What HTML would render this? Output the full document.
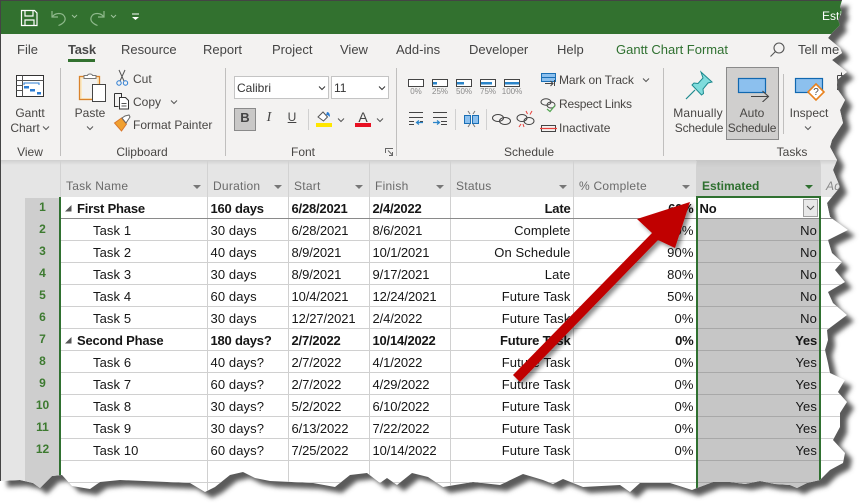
<!DOCTYPE html>
<html><head><meta charset="utf-8"><style>
html,body{margin:0;padding:0;width:861px;height:503px;overflow:hidden;background:#fff;font-family:"Liberation Sans",sans-serif}
#sh{position:absolute;left:0;top:0}
#c{position:absolute;left:0;top:0;width:861px;height:503px;overflow:hidden;background:#fff;
clip-path:polygon(0 0,842px 0,840px 7px,842px 12px,838px 20px,840px 25px,832px 33px,828px 38px,840px 48px,842px 53px,832px 60px,847px 72px,837px 80px,838px 90px,845px 100px,840px 110px,843px 123px,832px 140px,830px 147px,837px 160px,833px 170px,840px 187px,827px 203px,830px 217px,848px 230px,828px 240px,832px 253px,842px 262px,835px 270px,845px 282px,828px 292px,833px 303px,847px 315px,827px 330px,828px 340px,825px 350px,828px 363px,830px 373px,845px 380px,838px 392px,847px 402px,840px 413px,840px 427px,833px 440px,845px 453px,843px 463px,830px 470px,820px 480px,807px 483px,797px 488px,790px 485px,775px 484px,760px 481px,745px 484px,730px 482px,713px 482px,697px 488px,692px 490px,670px 483px,640px 483px,630px 492px,620px 485px,583px 487px,563px 479px,553px 484px,543px 480px,523px 474px,500px 485px,473px 482px,443px 487px,428px 477px,412px 473px,397px 485px,387px 478px,380px 483px,367px 473px,350px 475px,335px 487px,313px 483px,270px 481px,255px 478px,243px 472px,230px 475px,215px 487px,205px 492px,190px 483px,120px 480px,100px 482px,90px 489px,72px 486px,62px 475px,52px 476px,40px 488px,33px 483px,20px 480px,0 481px)}
.t{position:absolute;white-space:nowrap;line-height:14px;height:14px;color:#484644;font-size:12px;letter-spacing:0}
.tab{font-size:13px;letter-spacing:0;top:43px;color:#444}
.ctr{transform:translateX(-50%)}
.abs{position:absolute}
.sep{position:absolute;width:1px;background:#c0bfbe}
table{position:absolute;left:60px;top:197px;border-collapse:collapse;table-layout:fixed;width:800px;font-size:13px;color:#161616;letter-spacing:.1px}
td{height:19px;padding:2px 2px 0 3px;border-right:1px solid #d0d0d0;border-bottom:1px solid #d0d0d0;white-space:nowrap;overflow:hidden;box-sizing:content-box;line-height:14px}
td.r{text-align:right}
tr.b td{font-weight:bold;letter-spacing:-.2px}
td.e{background:#c6c6c6;border-right:none;border-bottom:1px solid #a8a8a8;text-align:right;padding-right:3px}
td.n{border-right:none}
td.d{letter-spacing:-.1px}
tr.f td{border-bottom:1px solid #8a8a8a;background:#fff}
.n1{padding-left:17px}.n2{padding-left:33px}
.h{position:absolute;top:179px;font-size:12px;color:#6a6a6a;line-height:14px;letter-spacing:.25px;white-space:nowrap}
.ar{position:absolute;top:185px;width:0;height:0;border-left:4px solid transparent;border-right:4px solid transparent;border-top:4px solid #777}
.rn{position:absolute;left:25px;width:35px;text-align:center;font-size:12px;font-weight:bold;color:#3d7a30;line-height:14px}
.lbl{position:absolute;font-size:8px;color:#8a8a8a;top:87px;letter-spacing:0;line-height:9px;white-space:nowrap;transform:translateX(-50%)}
</style></head><body>
<svg id="sh" width="861" height="503">
<defs><filter id="bl" x="-5%" y="-5%" width="110%" height="110%"><feGaussianBlur stdDeviation="2.300"/></filter></defs>
<polygon transform="translate(7,6)" filter="url(#bl)" fill="#5a5a5a" points="0,0 842,0 840,7 842,12 838,20 840,25 832,33 828,38 840,48 842,53 832,60 847,72 837,80 838,90 845,100 840,110 843,123 832,140 830,147 837,160 833,170 840,187 827,203 830,217 848,230 828,240 832,253 842,262 835,270 845,282 828,292 833,303 847,315 827,330 828,340 825,350 828,363 830,373 845,380 838,392 847,402 840,413 840,427 833,440 845,453 843,463 830,470 820,480 807,483 797,488 790,485 775,484 760,481 745,484 730,482 713,482 697,488 692,490 670,483 640,483 630,492 620,485 583,487 563,479 553,484 543,480 523,474 500,485 473,482 443,487 428,477 412,473 397,485 387,478 380,483 367,473 350,475 335,487 313,483 270,481 255,478 243,472 230,475 215,487 205,492 190,483 120,480 100,482 90,489 72,486 62,475 52,476 40,488 33,483 20,480 0,481"/>
</svg>
<div id="c">
<!-- title bar -->
<div class="abs" style="left:0;top:0;width:861px;height:34px;background:#32712f;border-top:1px solid #444;box-sizing:border-box"></div>
<div class="abs" style="left:0;top:34px;width:861px;height:126px;background:#f3f2f1"></div>
<div class="abs" style="left:0;top:160px;width:861px;height:38px;background:#e5e5e5"></div>
<div class="abs" style="left:0;top:160px;width:861px;height:5px;background:linear-gradient(#cfcfcf,#e5e5e5)"></div>
<div class="abs" style="left:0;top:198px;width:25px;height:290px;background:#e5e5e5"></div>
<div class="abs" style="left:25px;top:198px;width:35px;height:290px;background:#cecece"></div>
<div class="abs" style="left:0;top:0;width:1px;height:490px;background:#444"></div>

<svg class="abs" style="left:0;top:0" width="160" height="34" fill="none">
<path d="M21.500 10.500h13l2.500 2.500v12.500h-15.500z M25 10.500v5.500h8v-5.500 M25 25.500v-5.500h9v5.500" stroke="#fff" stroke-width="1.200"/>
<path d="M52 11v6h6 M52.500 16.500c3-4 10-4 12 0s-1 7-6 9" stroke="#8fb98c" stroke-width="1.200"/>
<path d="M104 11v6h-6 M103.500 16.500c-3-4-10-4-12 0s1 7 6 9" stroke="#8fb98c" stroke-width="1.200"/>
<path d="M72 15l2.500 2.500 2.500-2.500 M111 15l2.500 2.500 2.500-2.500" stroke="#9cc29a"/>
<path d="M132 14h7" stroke="#fff"/><path d="M132 17l3.500 3 3.500-3z" fill="#fff"/>
</svg>
<span class="t" style="left:822px;top:9px;color:#fff;font-size:12px">Esti</span>

<span class="t tab" style="left:17px">File</span>
<span class="t tab" style="left:68px;font-weight:bold;letter-spacing:-.2px;color:#4a4a4a">Task</span>
<div class="abs" style="left:68px;top:59px;width:27px;height:3px;background:#32712f"></div>
<span class="t tab" style="left:121px">Resource</span>
<span class="t tab" style="left:203px">Report</span>
<span class="t tab" style="left:272px">Project</span>
<span class="t tab" style="left:340px">View</span>
<span class="t tab" style="left:396px">Add-ins</span>
<span class="t tab" style="left:469px">Developer</span>
<span class="t tab" style="left:557px">Help</span>
<span class="t tab" style="left:616px;color:#2f7030">Gantt Chart Format</span>
<span class="t tab" style="left:798px">Tell me</span>
<svg class="abs" style="left:768px;top:41px" width="18" height="18" fill="none" stroke="#555" stroke-width="1.100"><circle cx="11" cy="7" r="5"/><path d="M7.500 10.500l-5 5"/></svg>

<div class="sep" style="left:60px;top:68px;height:88px"></div>
<div class="sep" style="left:225px;top:68px;height:88px"></div>
<div class="sep" style="left:396px;top:68px;height:88px"></div>
<div class="sep" style="left:663px;top:68px;height:88px"></div>
<div class="sep" style="left:783px;top:74px;height:60px"></div>
<div class="sep" style="left:308px;top:109px;height:21px;background:#d0d0d0"></div>
<div class="sep" style="left:455px;top:109px;height:21px;background:#d0d0d0"></div>
<div class="sep" style="left:486px;top:109px;height:21px;background:#d0d0d0"></div>

<!-- Gantt -->
<svg class="abs" style="left:14px;top:72px" width="32" height="28" fill="none">
<rect x="2.500" y="3.500" width="27" height="21" fill="#fff" stroke="#333"/>
<path d="M2.500 8.500h27M2.500 13.500h6M2.500 18.500h6M8.500 3.500v21" stroke="#555"/>
<path d="M10 13v-2h15v2" stroke="#2b7cd3"/>
<rect x="10" y="14" width="5" height="2.500" fill="#2b7cd3"/><rect x="16" y="17" width="5" height="2.500" fill="#2b7cd3"/><rect x="23" y="20" width="4" height="2.500" fill="#2b7cd3"/>
</svg>
<span class="t ctr" style="left:30px;top:106px">Gantt</span>
<span class="t ctr" style="left:25px;top:121px">Chart</span>
<svg class="abs" style="left:42px;top:125px" width="8" height="6" fill="none" stroke="#555"><path d="M1 1.500l3 3 3-3"/></svg>
<span class="t ctr" style="left:30px;top:145px">View</span>

<!-- Paste -->
<svg class="abs" style="left:76px;top:70px" width="34" height="34" fill="none">
<rect x="3.500" y="6.500" width="20" height="23" fill="#fbe9c4" stroke="#d9822b" stroke-width="1.300"/>
<rect x="6" y="9" width="15" height="19" fill="#f3f2f1" stroke="none"/>
<path d="M8 7.500v-2h3.500c.5-2 4.500-2 5 0h3.500v3h-12z" fill="#fff" stroke="#777"/>
<rect x="16.500" y="14.500" width="13" height="17" fill="#fff" stroke="#444"/>
</svg>
<span class="t ctr" style="left:90px;top:106px">Paste</span>
<svg class="abs" style="left:86px;top:125px" width="8" height="6" fill="none" stroke="#555"><path d="M1 1.500l3 3 3-3"/></svg>
<svg class="abs" style="left:115px;top:69px" width="16" height="18" fill="none">
<path d="M4 1l5 11M10 1l-5 11" stroke="#555"/><circle cx="4" cy="14" r="2.200" stroke="#2b7cd3"/><circle cx="10.500" cy="14" r="2.200" stroke="#2b7cd3"/>
</svg>
<span class="t" style="left:133px;top:72px">Cut</span>
<svg class="abs" style="left:113px;top:92px" width="18" height="18" fill="none" stroke="#333">
<path d="M1.500 1.500h7v5 M5.500 14.500h-4v-13"/><path d="M6.500 5.500h6l3 3v8.500h-9z" fill="#fff"/><path d="M8.500 11.500h5M8.500 14h5" stroke="#555"/></svg>
<span class="t" style="left:133px;top:95px">Copy</span>
<svg class="abs" style="left:170px;top:99px" width="8" height="6" fill="none" stroke="#555"><path d="M1 1.500l3 3 3-3"/></svg>
<svg class="abs" style="left:113px;top:114px" width="19" height="18" fill="none">
<path d="M1.500 9l7-5 5 6-5 7z" fill="#f0a030" stroke="#d9772b"/><path d="M9 4l3-2 4-1 1 2-2 3-2 3z" fill="#fff" stroke="#666"/></svg>
<span class="t" style="left:133px;top:118px">Format Painter</span>
<span class="t ctr" style="left:142px;top:145px">Clipboard</span>

<!-- Font -->
<div class="abs" style="left:234px;top:76px;width:95px;height:23px;background:#fff;border:1px solid #c4c4c4;box-sizing:border-box"></div>
<div class="abs" style="left:331px;top:76px;width:58px;height:23px;background:#fff;border:1px solid #c4c4c4;box-sizing:border-box"></div>
<span class="t" style="left:237px;top:81px;color:#333">Calibri</span>
<span class="t" style="left:334px;top:81px;color:#333">11</span>
<svg class="abs" style="left:318px;top:85px" width="8" height="6" fill="none" stroke="#333"><path d="M1 1.500l3 3 3-3"/></svg>
<svg class="abs" style="left:378px;top:85px" width="8" height="6" fill="none" stroke="#333"><path d="M1 1.500l3 3 3-3"/></svg>
<div class="abs" style="left:234px;top:108px;width:22px;height:23px;background:#c9c8c7;border:1px solid #8a8a8a;box-sizing:border-box"></div>
<span class="t ctr" style="left:245px;top:111px;font-weight:bold;font-size:13px;color:#444">B</span>
<span class="t ctr" style="left:269px;top:111px;font-style:italic;font-family:'Liberation Serif',serif;font-size:14px;color:#444">I</span>
<span class="t ctr" style="left:292px;top:110px;text-decoration:underline;font-size:12px;color:#444">U</span>
<svg class="abs" style="left:316px;top:109px" width="18" height="19" fill="none">
<path d="M2 8l5-5 4.500 5-4 4z" fill="#fff" stroke="#555"/><path d="M11 3c2 0 3 2 3 5-1-1-2-2-4-2z" fill="#2b7cd3"/>
<rect y="14" width="16" height="4" fill="#ffe600"/></svg>
<svg class="abs" style="left:337px;top:117px" width="8" height="6" fill="none" stroke="#555"><path d="M1 1.500l3 3 3-3"/></svg>
<span class="t ctr" style="left:363px;top:110px;font-size:14px;color:#444">A</span>
<div class="abs" style="left:355px;top:123px;width:16px;height:4px;background:#e81123"></div>
<svg class="abs" style="left:376px;top:117px" width="8" height="6" fill="none" stroke="#555"><path d="M1 1.500l3 3 3-3"/></svg>
<span class="t ctr" style="left:303px;top:145px">Font</span>
<svg class="abs" style="left:384px;top:147px" width="10" height="10" fill="none" stroke="#666"><path d="M1.500 6v-4.500h7.500M4 3.500l4.500 4.500M8.500 5v3.500h-3.500"/></svg>

<!-- Schedule -->
<svg class="abs" style="left:406px;top:76px" width="118" height="12">
<g fill="#fff" stroke="#444"><rect x="2.500" y="3.500" width="15" height="7"/><rect x="26.500" y="3.500" width="15" height="7"/><rect x="50.500" y="3.500" width="15" height="7"/><rect x="74.500" y="3.500" width="15" height="7"/><rect x="98.500" y="3.500" width="15" height="7"/></g>
<g fill="#2b85c9"><rect x="27" y="6" width="4" height="2.500"/><rect x="51" y="6" width="7" height="2.500"/><rect x="75" y="6" width="11" height="2.500"/><rect x="99" y="6" width="14" height="2.500"/></g>
</svg>
<span class="lbl" style="left:416px">0%</span><span class="lbl" style="left:440px">25%</span><span class="lbl" style="left:464px">50%</span><span class="lbl" style="left:488px">75%</span><span class="lbl" style="left:512px">100%</span>
<svg class="abs" style="left:408px;top:110px" width="130" height="18" fill="none">
<g stroke="#444"><path d="M1 2.500h14M1 7.500h14M1 11.500h5M12 11.500h3M1 14.500h5"/><path d="M25 2.500h14M25 7.500h14M33 11.500h6M33 14.500h6"/></g>
<path d="M15 12.500h-6M11 10.500l-2.500 2 2.500 2" stroke="#2b85c9" stroke-width="1.200"/>
<path d="M25 12.500h6M29 10.500l2.500 2-2.500 2" stroke="#2b85c9" stroke-width="1.200"/>
<rect x="56.500" y="5.500" width="6" height="8" fill="#8cc0ee" stroke="#1a6fb5"/><rect x="64.500" y="5.500" width="6" height="8" fill="#8cc0ee" stroke="#1a6fb5"/>
<path d="M60 1l2 3M67 1l-2 3M60 17l2-3M67 17l-2-3" stroke="#777"/>
<ellipse cx="90" cy="8" rx="5.500" ry="3.500" stroke="#444"/><ellipse cx="97" cy="11" rx="5.500" ry="3.500" stroke="#444"/>
<ellipse cx="114" cy="8" rx="5" ry="3.500" stroke="#444"/><ellipse cx="121" cy="11" rx="5" ry="3.500" stroke="#444"/>
<path d="M118 1l1.500 3M124 1l-2 3.500M111 17l2-3M116 17l-1-3" stroke="#e8413c"/>
</svg>
<span class="t ctr" style="left:529px;top:145px">Schedule</span>
<svg class="abs" style="left:539px;top:70px" width="20" height="66" fill="none">
<rect x="2.500" y="3.500" width="14" height="8" fill="#8cc0ee" stroke="#1a6fb5"/><path d="M2 7.500h15" stroke="#1a6fb5"/><path d="M6 13.500h8M11.500 11l2.500 2.500-2.500 2.500M15.500 10v6" stroke="#444"/>
<ellipse cx="7" cy="32" rx="5" ry="3.200" stroke="#444"/><ellipse cx="12" cy="35" rx="4" ry="3" stroke="#444"/><path d="M8 39l3 2.500 5-6" stroke="#53a652" stroke-width="1.200"/>
<path d="M2.500 55.500h14v6h-14z" stroke="#444"/><path d="M1 58.500h17" stroke="#e8413c" stroke-width="1.300"/>
</svg>
<span class="t" style="left:559px;top:73px;letter-spacing:-.1px">Mark on Track</span>
<svg class="abs" style="left:642px;top:77px" width="8" height="6" fill="none" stroke="#555"><path d="M1 1.500l3 3 3-3"/></svg>
<span class="t" style="left:559px;top:97px;letter-spacing:-.2px">Respect Links</span>
<span class="t" style="left:559px;top:121px">Inactivate</span>

<!-- Tasks -->
<svg class="abs" style="left:684px;top:70px" width="30" height="32" fill="none">
<path d="M17 2l11 10-4 1-5 6 .5 4.500-2 1.500L8 15l2-2 4 .5 5-5.500z" fill="#7fdcdc" stroke="#1d8a8f"/><path d="M11 20L2 29" stroke="#1d8a8f" stroke-width="1.200"/>
</svg>
<span class="t ctr" style="left:698px;top:106px;letter-spacing:.2px">Manually</span>
<span class="t ctr" style="left:699px;top:121px;letter-spacing:-.2px">Schedule</span>
<div class="abs" style="left:726px;top:67px;width:53px;height:73px;background:#d0cfce;border:1px solid #8a8a8a;box-sizing:border-box"></div>
<svg class="abs" style="left:736px;top:76px" width="34" height="26" fill="none">
<rect x="2.500" y="2.500" width="27" height="14" fill="#8cc0ee" stroke="#1168b0" stroke-width="1.200"/>
<path d="M15 20.500h17M26.500 15l6 5.500-6 5.500" stroke="#444" stroke-width="1.100"/>
</svg>
<span class="t ctr" style="left:752px;top:106px">Auto</span>
<span class="t ctr" style="left:752px;top:121px;letter-spacing:-.2px">Schedule</span>
<svg class="abs" style="left:793px;top:76px" width="34" height="28" fill="none">
<rect x="2.500" y="2.500" width="27" height="14" fill="#8cc0ee" stroke="#1168b0" stroke-width="1.200"/>
<path d="M23 8l8 8-8 8-8-8z" fill="#fff" stroke="#e8821e" stroke-width="1.600"/>
</svg>
<span class="t ctr" style="left:816px;top:86px;font-size:10px">?</span>
<span class="t ctr" style="left:809px;top:106px">Inspect</span>
<svg class="abs" style="left:804px;top:125px" width="8" height="6" fill="none" stroke="#555"><path d="M1 1.500l3 3 3-3"/></svg>
<span class="t ctr" style="left:792px;top:145px">Tasks</span>
<svg class="abs" style="left:836px;top:72px" width="12" height="20" fill="none" stroke="#444"><path d="M1.500 3.500h10M1.500 3.500v14h10M1.500 9.500h10M5.500 .5v5"/></svg>

<!-- header -->
<div class="abs" style="left:696px;top:160px;width:124px;height:38px;background:linear-gradient(#c6c6c6,#d2d2d2 20%)"></div>
<div class="abs" style="left:60px;top:197px;width:780px;height:1px;background:#9a9a9a"></div>
<div class="sep" style="left:60px;top:161px;height:36px;background:#d2d2d2"></div>
<div class="sep" style="left:207px;top:161px;height:36px;background:#d2d2d2"></div>
<div class="sep" style="left:288px;top:161px;height:36px;background:#d2d2d2"></div>
<div class="sep" style="left:369px;top:161px;height:36px;background:#d2d2d2"></div>
<div class="sep" style="left:450px;top:161px;height:36px;background:#d2d2d2"></div>
<div class="sep" style="left:573px;top:161px;height:36px;background:#d2d2d2"></div>
<div class="sep" style="left:696px;top:161px;height:36px;background:#d2d2d2"></div>
<div class="sep" style="left:820px;top:161px;height:36px;background:#d2d2d2"></div>
<span class="h" style="left:66px">Task Name</span><i class="ar" style="left:193px"></i>
<span class="h" style="left:213px">Duration</span><i class="ar" style="left:274px"></i>
<span class="h" style="left:294px">Start</span><i class="ar" style="left:355px"></i>
<span class="h" style="left:375px">Finish</span><i class="ar" style="left:436px"></i>
<span class="h" style="left:456px">Status</span><i class="ar" style="left:559px"></i>
<span class="h" style="left:579px">% Complete</span><i class="ar" style="left:682px"></i>
<span class="h" style="left:702px;font-weight:bold;color:#2f7030;letter-spacing:0">Estimated</span><i class="ar" style="left:805px;border-top-color:#2f7030"></i>
<span class="h" style="left:826px;font-style:italic;color:#8a8a8a">Add</span>

<!-- row nums -->
<span class="rn" style="top:200px">1</span><span class="rn" style="top:222px">2</span><span class="rn" style="top:244px">3</span><span class="rn" style="top:266px">4</span><span class="rn" style="top:288px">5</span><span class="rn" style="top:310px">6</span><span class="rn" style="top:332px">7</span><span class="rn" style="top:354px">8</span><span class="rn" style="top:376px">9</span><span class="rn" style="top:398px">10</span><span class="rn" style="top:420px">11</span><span class="rn" style="top:442px">12</span>

<table>
<colgroup><col style="width:147px"><col style="width:81px"><col style="width:81px"><col style="width:81px"><col style="width:123px"><col style="width:123px"><col style="width:124px"><col style="width:40px"></colgroup>
<tr class="b f"><td class="n1">First Phase</td><td>160 days</td><td>6/28/2021</td><td>2/4/2022</td><td class="r">Late</td><td class="r">60%</td><td style="background:#fff;border-right:none">No</td><td class="n"></td></tr>
<tr><td class="n2">Task 1</td><td>30 days</td><td class="d">6/28/2021</td><td class="d">8/6/2021</td><td class="r">Complete</td><td class="r">100%</td><td class="e">No</td><td class="n"></td></tr>
<tr><td class="n2">Task 2</td><td>40 days</td><td class="d">8/9/2021</td><td class="d">10/1/2021</td><td class="r">On Schedule</td><td class="r">90%</td><td class="e">No</td><td class="n"></td></tr>
<tr><td class="n2">Task 3</td><td>30 days</td><td class="d">8/9/2021</td><td class="d">9/17/2021</td><td class="r">Late</td><td class="r">80%</td><td class="e">No</td><td class="n"></td></tr>
<tr><td class="n2">Task 4</td><td>60 days</td><td class="d">10/4/2021</td><td class="d">12/24/2021</td><td class="r">Future Task</td><td class="r">50%</td><td class="e">No</td><td class="n"></td></tr>
<tr><td class="n2">Task 5</td><td>30 days</td><td class="d">12/27/2021</td><td class="d">2/4/2022</td><td class="r">Future Task</td><td class="r">0%</td><td class="e">No</td><td class="n"></td></tr>
<tr class="b"><td class="n1">Second Phase</td><td>180 days?</td><td>2/7/2022</td><td>10/14/2022</td><td class="r">Future Task</td><td class="r">0%</td><td class="e">Yes</td><td class="n"></td></tr>
<tr><td class="n2">Task 6</td><td>40 days?</td><td class="d">2/7/2022</td><td class="d">4/1/2022</td><td class="r">Future Task</td><td class="r">0%</td><td class="e">Yes</td><td class="n"></td></tr>
<tr><td class="n2">Task 7</td><td>60 days?</td><td class="d">2/7/2022</td><td class="d">4/29/2022</td><td class="r">Future Task</td><td class="r">0%</td><td class="e">Yes</td><td class="n"></td></tr>
<tr><td class="n2">Task 8</td><td>30 days?</td><td class="d">5/2/2022</td><td class="d">6/10/2022</td><td class="r">Future Task</td><td class="r">0%</td><td class="e">Yes</td><td class="n"></td></tr>
<tr><td class="n2">Task 9</td><td>30 days?</td><td class="d">6/13/2022</td><td class="d">7/22/2022</td><td class="r">Future Task</td><td class="r">0%</td><td class="e">Yes</td><td class="n"></td></tr>
<tr><td class="n2">Task 10</td><td>60 days?</td><td class="d">7/25/2022</td><td class="d">10/14/2022</td><td class="r">Future Task</td><td class="r">0%</td><td class="e">Yes</td><td class="n"></td></tr>
<tr><td></td><td></td><td></td><td></td><td></td><td></td><td class="e"></td><td class="n"></td></tr>
<tr><td></td><td></td><td></td><td></td><td></td><td></td><td class="e"></td><td class="n"></td></tr>
</table>

<svg class="abs" style="left:64px;top:204px" width="9" height="9"><path d="M1 7.500h6.500v-6.500z" fill="#555"/></svg>
<svg class="abs" style="left:64px;top:336px" width="9" height="9"><path d="M1 7.500h6.500v-6.500z" fill="#555"/></svg>

<!-- selection -->
<div class="abs" style="left:59px;top:197px;width:2px;height:293px;background:#2f7030"></div>
<div class="abs" style="left:696px;top:197px;width:2px;height:293px;background:#2f7030"></div>
<div class="abs" style="left:819px;top:197px;width:2px;height:293px;background:#2f7030"></div>
<div class="abs" style="left:696px;top:196px;width:125px;height:2px;background:#2f7030"></div>
<div class="abs" style="left:803px;top:199px;width:15px;height:18px;background:#e8e8e8;border:1px solid #a0a0a0;box-sizing:border-box"></div>
<svg class="abs" style="left:806px;top:205px" width="9" height="6" fill="none" stroke="#555"><path d="M1 1l3.500 3.500L8 1"/></svg>

<!-- arrow -->
<svg class="abs" style="left:0;top:0" width="861" height="503">
<defs><filter id="ds" x="-10%" y="-10%" width="125%" height="125%"><feDropShadow dx="3" dy="3" stdDeviation="2" flood-color="#000" flood-opacity=".45"/></filter></defs>
<polygon filter="url(#ds)" fill="#c00000" points="690,202 675,248 658,240 520,382 513,375 652,233 637,219"/>
</svg>
</div>
</body></html>
